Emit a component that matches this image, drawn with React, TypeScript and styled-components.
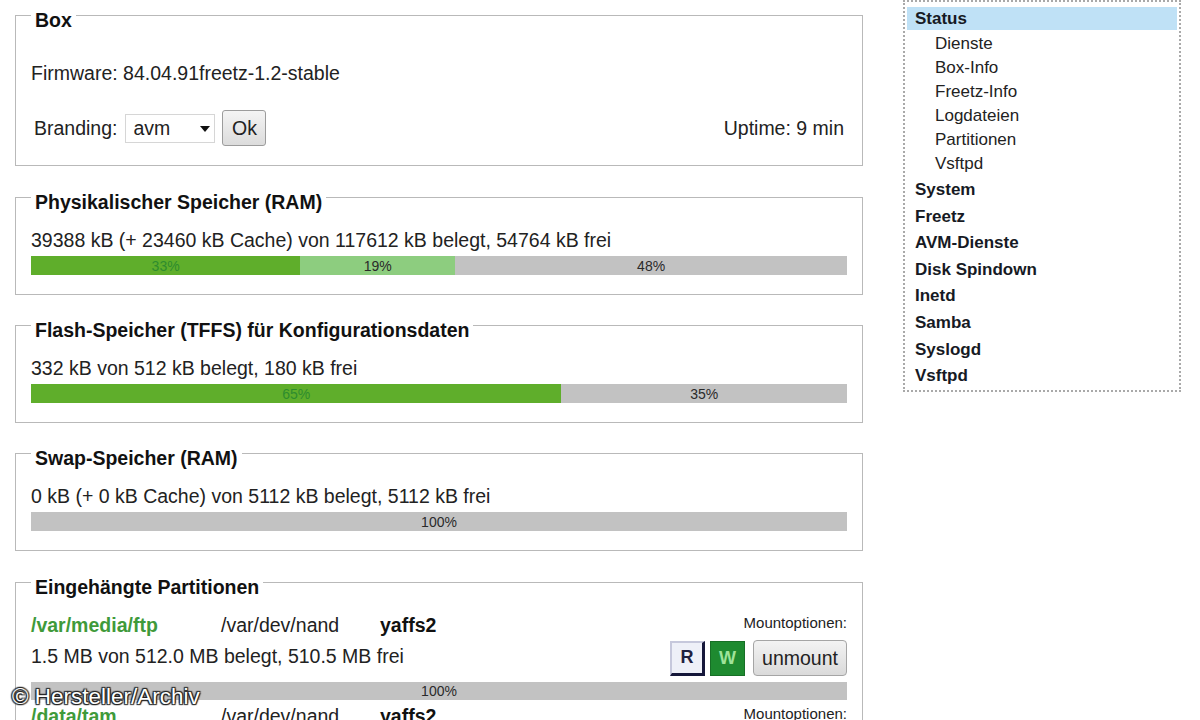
import React from 'react';
import styled, { createGlobalStyle } from 'styled-components';

const GlobalStyle = createGlobalStyle`
  html, body {
    margin: 0;
    padding: 0;
    background: #ffffff;
  }
  body {
    font-family: "Liberation Sans", Arial, sans-serif;
    color: #222222;
    overflow: hidden;
  }
`;

const Page = styled.div`
  position: relative;
  display: flex;
  align-items: flex-start;
  width: 1200px;
  height: 720px;
  overflow: hidden;
`;

const Main = styled.div`
  width: 848px;
  margin-left: 15px;
`;

// legend text sits a little below the border line, as in the old freetz UI
const Fieldset = styled.fieldset<{ $top?: number; $gap?: number }>`
  margin: 0 0 ${(p) => p.$gap ?? 15}px;
  padding: ${(p) => p.$top ?? 18}px 15px 19px;
  border: 1px solid #b9b9b9;
  min-width: 0;
`;

const Legend = styled.legend`
  padding: 10px 4px 0;
  font-size: 19.5px;
  line-height: 20px;
  font-weight: bold;
  color: #111111;
`;

const Line = styled.div`
  font-size: 19.5px;
  line-height: 20px;
  white-space: nowrap;
`;

const BrandingRow = styled.div`
  display: flex;
  align-items: center;
  justify-content: space-between;
  height: 36px;
  margin-top: 27px;
  padding: 0 3px;
  font-size: 19.5px;
`;

const BrandingGroup = styled.div`
  display: flex;
  align-items: center;
`;

const SelectWrap = styled.div`
  position: relative;
  margin-left: 8px;
`;

const Select = styled.select`
  appearance: none;
  width: 90px;
  height: 29px;
  padding: 0 0 0 7px;
  border: 1px solid #d6d6d6;
  background: #ffffff;
  font-family: inherit;
  font-size: 19.5px;
  color: #222222;
`;

const Arrow = styled.span`
  position: absolute;
  right: 5px;
  top: 12px;
  width: 0;
  height: 0;
  border-left: 5px solid transparent;
  border-right: 5px solid transparent;
  border-top: 6px solid #111111;
  pointer-events: none;
`;

const OkButton = styled.button`
  width: 44px;
  height: 36px;
  margin-left: 7px;
  padding: 0;
  border: 1px solid #9c9c9c;
  border-radius: 3px;
  background: linear-gradient(#f4f4f4, #dcdcdc);
  font-family: inherit;
  font-size: 19.5px;
  color: #222222;
`;

const Bar = styled.div<{ $h?: number }>`
  display: flex;
  height: ${(p) => p.$h ?? 19}px;
  margin-top: 6px;
  background: #c2c2c2;
`;

const Segment = styled.div<{ $kind: 'used' | 'cache' | 'free' }>`
  display: flex;
  align-items: center;
  justify-content: center;
  font-size: 14px;
  background: ${(p) =>
    p.$kind === 'used' ? '#5fae2b' : p.$kind === 'cache' ? '#8dcd7f' : '#c2c2c2'};
  color: ${(p) => (p.$kind === 'used' ? '#2e8c2e' : '#2a2a2a')};
`;

const Entry = styled.div<{ $first?: boolean }>`
  display: flex;
  justify-content: space-between;
  margin-top: ${(p) => (p.$first ? 0 : 6)}px;
`;

const NameRow = styled.div`
  display: grid;
  grid-template-columns: 190px 159px auto;
  font-size: 19.5px;
  line-height: 20px;
  white-space: nowrap;
`;

const MountPoint = styled.span`
  font-weight: bold;
  color: #3f9a3a;
`;

const FsType = styled.span`
  font-weight: bold;
  color: #111111;
`;

const Usage = styled(Line)`
  margin-top: 11px;
`;

const Options = styled.div`
  display: flex;
  flex-direction: column;
  align-items: flex-end;
`;

const OptionsLabel = styled.div`
  font-size: 15px;
  line-height: 16px;
  color: #222222;
`;

const OptionButtons = styled.div`
  display: flex;
  align-items: center;
  gap: 5px;
  margin-top: 9px;
`;

const FlagButton = styled.div<{ $on?: boolean }>`
  display: flex;
  align-items: center;
  justify-content: center;
  box-sizing: border-box;
  width: 35px;
  height: 35px;
  font-size: 18px;
  font-weight: bold;
  ${(p) =>
    p.$on
      ? `background: #1e8a30; color: #9fe39a; border: 1px solid #176f26;`
      : `background: #eef0f8; color: #1f2240;
         border-top: 2px solid #c6c8dc; border-left: 2px solid #c6c8dc;
         border-bottom: 3px solid #15173a; border-right: 3px solid #15173a;`}
`;

const UnmountButton = styled.button`
  width: 94px;
  height: 36px;
  margin-left: 3px;
  padding: 0;
  border: 1px solid #a5a5a5;
  border-radius: 4px;
  background: linear-gradient(#f3f3f3, #dadada);
  font-family: inherit;
  font-size: 19.5px;
  color: #222222;
`;

const Sidebar = styled.nav`
  width: 278px;
  box-sizing: border-box;
  margin-left: 40px;
  padding: 5px 2px 0;
  border: 2px dotted #a9a9a9;
`;

const NavHead = styled.div<{ $active?: boolean }>`
  padding-left: 8px;
  font-size: 17px;
  font-weight: bold;
  line-height: ${(p) => (p.$active ? '23px' : '26.6px')};
  color: #161a24;
  background: ${(p) => (p.$active ? '#bfe1f6' : 'transparent')};
`;

const SubList = styled.div`
  padding: 2px 0 1px;
`;

const SubItem = styled.div`
  padding-left: 28px;
  font-size: 17px;
  line-height: 24px;
  color: #222222;
`;

const Watermark = styled.div`
  position: absolute;
  left: 12px;
  top: 684px;
  font-size: 22.5px;
  color: #ffffff;
  text-shadow: 0 0 2px #222, 1px 1px 1px #222, -1px -1px 1px #222, 1px -1px 1px #222,
    -1px 1px 1px #222;
`;

type Seg = { kind: 'used' | 'cache' | 'free'; pct: number };

const UsageBar = ({ segs, h }: { segs: Seg[]; h?: number }) => (
  <Bar $h={h}>
    {segs.map((s, i) => (
      <Segment key={i} $kind={s.kind} style={{ width: `${s.pct}%` }}>
        {s.pct}%
      </Segment>
    ))}
  </Bar>
);

const partitions = [
  { mount: '/var/media/ftp', dev: '/var/dev/nand', fs: 'yaffs2', usage: '1.5 MB von 512.0 MB belegt, 510.5 MB frei' },
  { mount: '/data/tam', dev: '/var/dev/nand', fs: 'yaffs2', usage: '0.1 MB von 512.0 MB belegt, 511.9 MB frei' },
];

const subItems = ['Dienste', 'Box-Info', 'Freetz-Info', 'Logdateien', 'Partitionen', 'Vsftpd'];
const headItems = ['System', 'Freetz', 'AVM-Dienste', 'Disk Spindown', 'Inetd', 'Samba', 'Syslogd', 'Vsftpd'];

export default function App() {
  return (
    <>
      <GlobalStyle />
      <Page>
        <Main>
          <Fieldset $top={33} $gap={16}>
            <Legend>Box</Legend>
            <Line>Firmware: 84.04.91freetz-1.2-stable</Line>
            <BrandingRow>
              <BrandingGroup>
                Branding:
                <SelectWrap>
                  <Select defaultValue="avm">
                    <option value="avm">avm</option>
                  </Select>
                  <Arrow />
                </SelectWrap>
                <OkButton>Ok</OkButton>
              </BrandingGroup>
              <span>Uptime: 9 min</span>
            </BrandingRow>
          </Fieldset>

          <Fieldset>
            <Legend>Physikalischer Speicher (RAM)</Legend>
            <Line>39388 kB (+ 23460 kB Cache) von 117612 kB belegt, 54764 kB frei</Line>
            <UsageBar
              segs={[
                { kind: 'used', pct: 33 },
                { kind: 'cache', pct: 19 },
                { kind: 'free', pct: 48 },
              ]}
            />
          </Fieldset>

          <Fieldset>
            <Legend>Flash-Speicher (TFFS) für Konfigurationsdaten</Legend>
            <Line>332 kB von 512 kB belegt, 180 kB frei</Line>
            <UsageBar
              segs={[
                { kind: 'used', pct: 65 },
                { kind: 'free', pct: 35 },
              ]}
            />
          </Fieldset>

          <Fieldset $gap={16}>
            <Legend>Swap-Speicher (RAM)</Legend>
            <Line>0 kB (+ 0 kB Cache) von 5112 kB belegt, 5112 kB frei</Line>
            <UsageBar segs={[{ kind: 'free', pct: 100 }]} />
          </Fieldset>

          <Fieldset>
            <Legend>Eingehängte Partitionen</Legend>
            {partitions.map((p, i) => (
              <React.Fragment key={p.mount}>
                <Entry $first={i === 0}>
                  <div>
                    <NameRow>
                      <MountPoint>{p.mount}</MountPoint>
                      <span>{p.dev}</span>
                      <FsType>{p.fs}</FsType>
                    </NameRow>
                    <Usage>{p.usage}</Usage>
                  </div>
                  <Options>
                    <OptionsLabel>Mountoptionen:</OptionsLabel>
                    <OptionButtons>
                      <FlagButton>R</FlagButton>
                      <FlagButton $on>W</FlagButton>
                      <UnmountButton>unmount</UnmountButton>
                    </OptionButtons>
                  </Options>
                </Entry>
                <UsageBar h={18} segs={[{ kind: 'free', pct: 100 }]} />
              </React.Fragment>
            ))}
          </Fieldset>
        </Main>

        <Sidebar>
          <NavHead $active>Status</NavHead>
          <SubList>
            {subItems.map((s) => (
              <SubItem key={s}>{s}</SubItem>
            ))}
          </SubList>
          {headItems.map((h) => (
            <NavHead key={h}>{h}</NavHead>
          ))}
        </Sidebar>

        <Watermark>© Hersteller/Archiv</Watermark>
      </Page>
    </>
  );
}
